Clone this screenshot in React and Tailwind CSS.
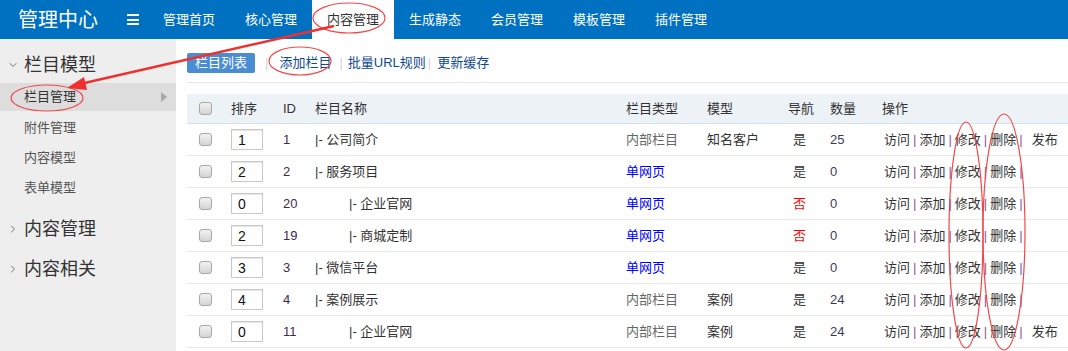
import { ChevronDown, ChevronRight } from 'lucide-react'

const NAV = ['管理首页', '核心管理', '内容管理', '生成静态', '会员管理', '模板管理', '插件管理']

const ROWS = [
  { sort: 1, id: 1, name: '公司简介', lvl: 0, type: '内部栏目', model: '知名客户', nav: '是', count: 25, pub: true },
  { sort: 2, id: 2, name: '服务项目', lvl: 0, type: '单网页', model: '', nav: '是', count: 0 },
  { sort: 0, id: 20, name: '企业官网', lvl: 1, type: '单网页', model: '', nav: '否', count: 0 },
  { sort: 2, id: 19, name: '商城定制', lvl: 1, type: '单网页', model: '', nav: '否', count: 0 },
  { sort: 3, id: 3, name: '微信平台', lvl: 0, type: '单网页', model: '', nav: '是', count: 0 },
  { sort: 4, id: 4, name: '案例展示', lvl: 0, type: '内部栏目', model: '案例', nav: '是', count: 24 },
  { sort: 0, id: 11, name: '企业官网', lvl: 1, type: '内部栏目', model: '案例', nav: '是', count: 24, pub: true },
]

const GRID = 'grid grid-cols-[44px_52px_32px_311px_81px_81px_42px_52px_1fr] items-center'

function Check() {
  return (
    <span className="block w-[13px] h-[13px] rounded-[3px] border border-[#a8a8a8] bg-gradient-to-b from-[#f2f2f2] to-[#d4d4d4]" />
  )
}

function Sep() {
  return <span className="mx-[3px] text-[#8a5aa0]">|</span>
}

function Annotations() {
  return (
    <svg className="absolute left-0 top-0 pointer-events-none" width="1068" height="351">
      <g fill="none" stroke="#f04848" strokeWidth="1.2">
        <ellipse cx="349" cy="18" rx="36" ry="15" />
        <ellipse cx="300" cy="61" rx="31" ry="14" />
        <ellipse cx="47" cy="98" rx="36" ry="13" />
        <ellipse cx="966" cy="235" rx="17" ry="113" />
        <ellipse cx="1004" cy="232" rx="21" ry="118" />
      </g>
      <line x1="334" y1="26" x2="80" y2="84" stroke="#f03030" strokeWidth="2.5" />
      <polygon points="67,88 84,77 87,90" fill="#f03030" />
    </svg>
  )
}

export default function App() {
  return (
    <div className="relative w-[1068px] h-[351px] overflow-hidden bg-white text-[13px] text-[#333]"
      style={{ fontFamily: '"Liberation Sans", "Noto Sans CJK SC", sans-serif' }}>
      <header className="flex h-[39px] bg-[#0070c0] text-white">
        <div className="flex items-center w-[148px] pl-[18px]">
          <span className="text-[20px] leading-none">管理中心</span>
          <span className="ml-[29px] flex flex-col gap-[2.5px]">
            <span className="block w-[12px] h-[2px] bg-white" />
            <span className="block w-[12px] h-[2px] bg-white" />
            <span className="block w-[12px] h-[2px] bg-white" />
          </span>
        </div>
        {NAV.map(n => (
          <div key={n}
            className={`flex items-center justify-center w-[82px] ${n === '内容管理' ? 'bg-white text-[#333]' : ''}`}>
            {n}
          </div>
        ))}
      </header>

      <div className="flex h-[312px]">
        <aside className="w-[176px] shrink-0 bg-[#eeeeee] pt-[8px]">
          <div className="flex items-center h-[36px] pl-[7px] text-[18px] text-[#333]">
            <ChevronDown size={12} strokeWidth={1.6} className="text-[#555] mr-[5px]" />
            栏目模型
          </div>
          <div className="flex items-center justify-between h-[28px] mb-[2px] pl-[24px] pr-[9px] bg-[#dddddd] text-[#333]">
            栏目管理
            <span className="w-0 h-0 border-y-[5px] border-y-transparent border-l-[6px] border-l-[#aaa]" />
          </div>
          {['附件管理', '内容模型', '表单模型'].map(s => (
            <div key={s} className="flex items-center h-[30px] pl-[24px] text-[#555]">{s}</div>
          ))}
          <div className="mt-[6px]">
            {['内容管理', '内容相关'].map(s => (
              <div key={s} className="flex items-center h-[40px] pl-[7px] text-[18px] text-[#333]">
                <ChevronRight size={12} strokeWidth={1.6} className="text-[#555] mr-[5px]" />
                {s}
              </div>
            ))}
          </div>
        </aside>

        <main className="flex-1 pl-[11px] pt-[14px]">
          <div className="flex items-start h-[30px] border-b border-[#e6e6e6] leading-[20px]">
            <span className="h-[20px] px-[8px] bg-[#4b8dd3] text-white rounded-[2px]">栏目列表</span>
            <span className="ml-[10px] mr-[11px] text-[#d4d4d4]">|</span>
            <span className="text-[#114a8c]">添加栏目</span>
            <span className="ml-[8px] mr-[5px] text-[#d4d4d4]">|</span>
            <span className="text-[#114a8c]">批量URL规则</span>
            <span className="ml-[2px] mr-[6px] text-[#d4d4d4]">|</span>
            <span className="text-[#114a8c]">更新缓存</span>
          </div>

          <div className="mt-[11px]">
            <div className={`${GRID} h-[30px] bg-[#edf2f6] border-b border-[#d6e0e8]`}>
              <div className="pl-[12px]"><Check /></div>
              <div>排序</div>
              <div>ID</div>
              <div>栏目名称</div>
              <div>栏目类型</div>
              <div>模型</div>
              <div>导航</div>
              <div>数量</div>
              <div>操作</div>
            </div>
            {ROWS.map((r, i) => (
              <div key={i} className={`${GRID} h-[32px] border-b border-[#e8e8e8]`}>
                <div className="pl-[12px]"><Check /></div>
                <div>
                  <span className="block w-[32px] h-[21px] pl-[6px] border border-[#c8c8c8] shadow-[inset_0_1px_1px_#e4e4e4] text-[14px] leading-[20px] text-[#111]">
                    {r.sort}
                  </span>
                </div>
                <div className="text-[#3c2a50]">{r.id}</div>
                <div className={r.lvl ? 'pl-[34px]' : ''}>|- {r.name}</div>
                <div className={r.type === '单网页' ? 'text-[#0000ff]' : 'text-[#666]'}>{r.type}</div>
                <div>{r.model}</div>
                <div className={`pl-[5px] ${r.nav === '否' ? 'text-[#ff0000]' : ''}`}>{r.nav}</div>
                <div className="text-[#3a3a5e]">{r.count}</div>
                <div className="whitespace-nowrap pl-[2px]">
                  访问<Sep />添加<Sep />修改<Sep />删除<Sep />
                  {r.pub && <span className="ml-[6px]">发布</span>}
                </div>
              </div>
            ))}
          </div>
        </main>
      </div>

      <Annotations />
    </div>
  )
}
